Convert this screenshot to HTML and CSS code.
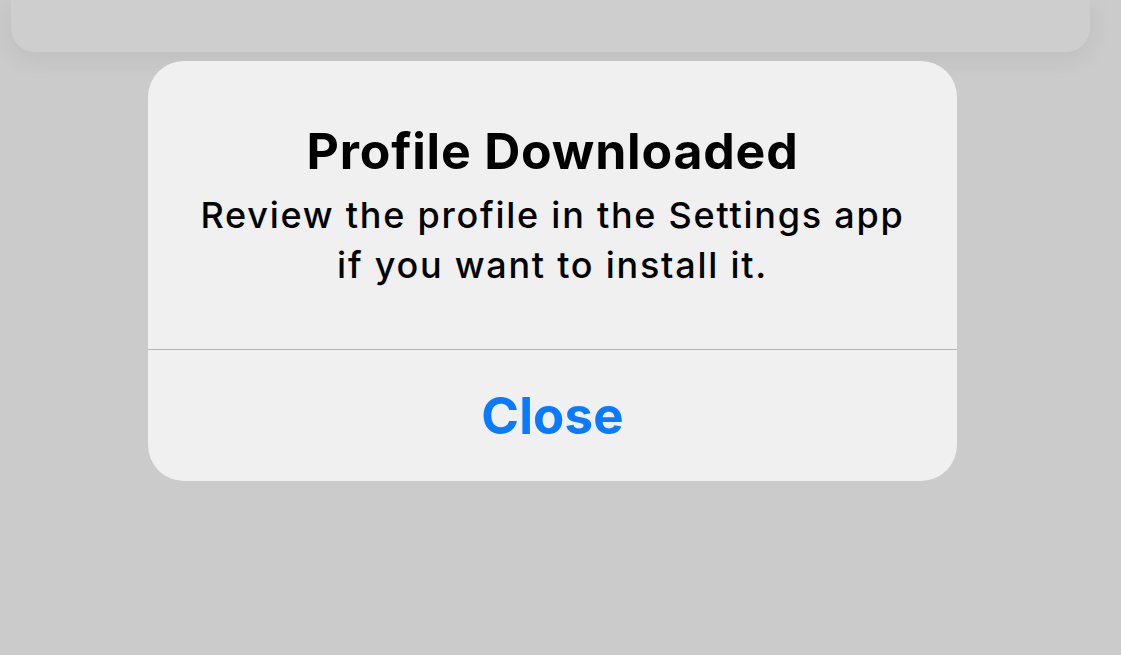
FILE: index.html
```html
<!DOCTYPE html>
<html lang="en">
<head>
<meta charset="utf-8">
<title>Profile Downloaded</title>
<link rel="stylesheet" href="styles.css">
</head>
<body>
<div class="screen">
  <div class="top-card"></div>
  <div class="alert" role="alertdialog">
    <div class="alert-body">
      <h1 class="alert-title">Profile Downloaded</h1>
      <p class="alert-message">Review the profile in the Settings app<br>if you want to install it.</p>
    </div>
    <div class="alert-divider"></div>
    <button class="alert-button">Close</button>
  </div>
</div>
</body>
</html>
```

FILE: styles.css
```css
html, body {
  margin: 0;
  padding: 0;
  background: #cbcbcb;
  width: 1121px;
  height: 655px;
  overflow: hidden;
}

.screen {
  display: flex;
  flex-direction: column;
  font-family: Inter, "Noto Sans", sans-serif;
  color: #000;
}

.top-card {
  height: 52px;
  margin: 0 31px 0 11px;
  background: #cecece;
  border-radius: 0 0 24px 24px;
  box-shadow: 0 6px 28px rgba(0, 0, 0, 0.07);
}

.alert {
  margin: 9px 0 0 148px;
  width: 809px;
  height: 420px;
  background: #f0f0f0;
  border-radius: 36px;
  display: flex;
  flex-direction: column;
  overflow: hidden;
}

.alert-body {
  height: 228px;
  padding-top: 60px;
  text-align: center;
}

.alert-title {
  margin: 0;
  font-size: 50px;
  line-height: 60px;
  font-weight: 700;
  letter-spacing: 0.8px;
}

.alert-message {
  margin: 9px 0 0;
  font-size: 36px;
  line-height: 50px;
  font-weight: 500;
  letter-spacing: 1.75px;
}

.alert-divider {
  height: 1px;
  background: #b5b5b5;
}

.alert-button {
  flex: 1;
  border: 0;
  background: transparent;
  padding: 0;
  font-family: inherit;
  font-size: 51px;
  line-height: 131px;
  font-weight: 700;
  color: #0a7aff;
  letter-spacing: 0.1px;
}
```
